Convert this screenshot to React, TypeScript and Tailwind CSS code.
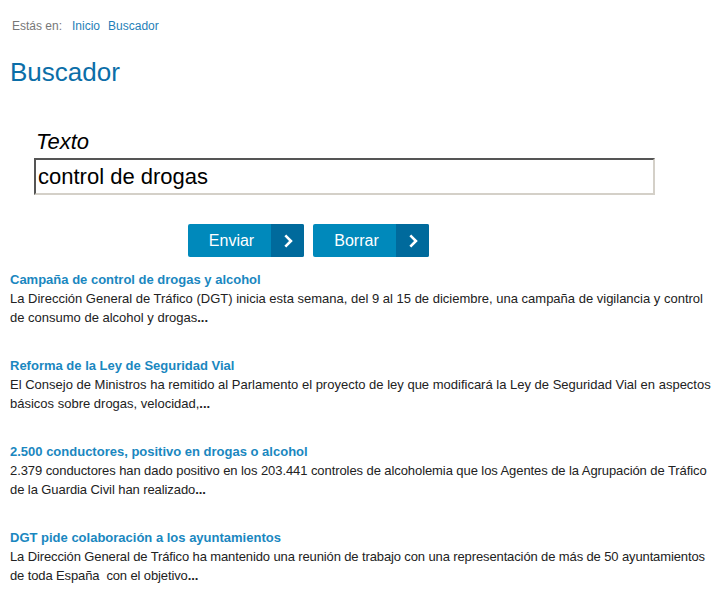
import React from 'react'

const results = [
  {
    title: 'Campaña de control de drogas y alcohol',
    lines: [
      'La Dirección General de Tráfico (DGT) inicia esta semana, del 9 al 15 de diciembre, una campaña de vigilancia y control',
      'de consumo de alcohol y drogas',
    ],
    tracking: 'tracking-normal',
  },
  {
    title: 'Reforma de la Ley de Seguridad Vial',
    lines: [
      'El Consejo de Ministros ha remitido al Parlamento el proyecto de ley que modificará la Ley de Seguridad Vial en aspectos',
      'básicos sobre drogas, velocidad,',
    ],
    tracking: 'tracking-normal',
  },
  {
    title: '2.500 conductores, positivo en drogas o alcohol',
    lines: [
      '2.379 conductores han dado positivo en los 203.441 controles de alcoholemia que los Agentes de la Agrupación de Tráfico',
      'de la Guardia Civil han realizado',
    ],
    tracking: 'tracking-[-0.08px]',
  },
  {
    title: 'DGT pide colaboración a los ayuntamientos',
    lines: [
      'La Dirección General de Tráfico ha mantenido una reunión de trabajo con una representación de más de 50 ayuntamientos',
      'de toda España\u00a0 con el objetivo',
    ],
    tracking: 'tracking-[-0.12px]',
  },
]

const Chevron = () => (
  <svg width="14" height="14" viewBox="0 0 24 24" fill="none" stroke="white" strokeWidth="4.5" strokeLinecap="square">
    <path d="M9 4l8 8-8 8" />
  </svg>
)

const Btn = ({ label }: { label: string }) => (
  <button className="flex h-[33px] w-[116px] overflow-hidden rounded-[2px] bg-[#0089bb] text-[16px] text-white">
    <span className="flex flex-1 items-center justify-center pl-[4px]">{label}</span>
    <span className="flex w-[33px] items-center justify-center bg-[#006a9c]">
      <Chevron />
    </span>
  </button>
)

export default function App() {
  return (
    <div className="h-[591px] w-[717px] overflow-hidden bg-white pl-[10px] pr-[4px] font-['Liberation_Sans',Arial,sans-serif]">
      <div className="flex pt-[18px] text-[12px] leading-[16px]">
        <span className="ml-[2px] text-[#777]">Estás en:</span>
        <a className="ml-[10px] text-[#1f7fb8]">Inicio</a>
        <a className="ml-[8px] text-[#1f7fb8]">Buscador</a>
      </div>
      <h1 className="mt-[23px] text-[26px] leading-[30px] text-[#0b6ea8]">Buscador</h1>

      <div className="ml-[24px] mt-[42px] w-[621px]">
        <label className="block pl-[2px] text-[22px] italic leading-[26px] text-black">Texto</label>
        <div className="mt-[3px] h-[37px] border-2 border-b-[#d4d0c8] border-l-[#555] border-r-[#d4d0c8] border-t-[#555] px-[2px] text-[22px] leading-[33px] text-black">
          control de drogas
        </div>
      </div>

      <div className="ml-[178px] mt-[29px] flex gap-[9px]">
        <Btn label="Enviar" />
        <Btn label="Borrar" />
      </div>

      <div className="mt-[13px] flex flex-col gap-[29px]">
        {results.map((r) => (
          <div key={r.title} className="text-[13px] leading-[19px]">
            <a className="block font-bold text-[#1a87c0]">{r.title}</a>
            <p className={`whitespace-nowrap text-[#222] ${r.tracking}`}>
              {r.lines[0]}
              <br />
              {r.lines[1]}
              <b>...</b>
            </p>
          </div>
        ))}
      </div>
    </div>
  )
}
